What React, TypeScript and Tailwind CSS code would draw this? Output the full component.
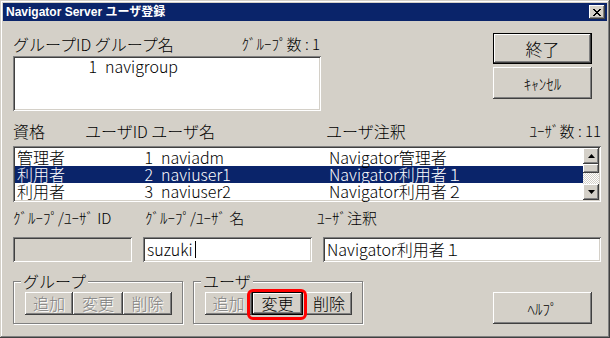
import React from "react";

const raised =
  "shadow-[inset_-1px_-1px_#404040,inset_1px_1px_#ffffff,inset_-2px_-2px_#808080,inset_2px_2px_#d4d0c8]";
const sunken =
  "shadow-[inset_1px_1px_#808080,inset_-1px_-1px_#ffffff,inset_2px_2px_#404040,inset_-2px_-2px_#d4d0c8]";
const disabledText = "text-[#808080] [text-shadow:1px_1px_0_#ffffff]";

function Btn({
  children,
  className = "",
  disabled = false,
}: {
  children: React.ReactNode;
  className?: string;
  disabled?: boolean;
}) {
  return (
    <div
      className={`flex items-center justify-center bg-[#d4d0c8] ${raised} ${
        disabled ? disabledText : "text-black"
      } ${className}`}
    >
      {children}
    </div>
  );
}

function Arrow({ up }: { up: boolean }) {
  return (
    <svg width="7" height="4" viewBox="0 0 7 4">
      {up ? (
        <path d="M3.5 0 L7 4 L0 4 Z" fill="#000" />
      ) : (
        <path d="M0 0 L7 0 L3.5 4 Z" fill="#000" />
      )}
    </svg>
  );
}

const users = [
  { role: "管理者", id: "1", name: "naviadm", note: "Navigator管理者" },
  { role: "利用者", id: "2", name: "naviuser1", note: "Navigator利用者１" },
  { role: "利用者", id: "3", name: "naviuser2", note: "Navigator利用者２" },
];

export default function App() {
  return (
    <div
      className="w-[610px] h-[338px] bg-[#d4d0c8] overflow-hidden shadow-[inset_-1px_-1px_#404040,inset_1px_1px_#d4d0c8,inset_-2px_-2px_#808080,inset_2px_2px_#ffffff] text-[16px] font-light leading-[17px] text-black"
      style={{ fontFamily: '"Noto Sans CJK JP", "Liberation Sans", sans-serif' }}
    >
      {/* Title bar */}
      <div className="mx-[3px] pt-[3px]">
        <div className="h-[18px] bg-[#0a246a] flex items-center justify-between pl-[3px] pr-[2px]">
          <span
            className="text-white font-bold text-[12px] leading-[18px]"
            style={{ fontFamily: '"Liberation Sans", "Noto Sans CJK JP", sans-serif' }}
          >
            Navigator Server ユーザ登録
          </span>
          <div className={`w-[16px] h-[14px] bg-[#d4d0c8] ${raised} flex items-center justify-center`}>
            <svg width="8" height="7" viewBox="0 0 8 7">
              <path
                d="M0 0h2v1h1v1h2v-1h1v-1h2v1h-1v1h-1v1h-1v1h1v1h1v1h1v1h-2v-1h-1v-1h-2v1h-1v1h-2v-1h1v-1h1v-1h1v-1h-1v-1h-1v-1h-1z"
                fill="#000"
              />
            </svg>
          </div>
        </div>
      </div>

      <div className="pl-[13px] pr-[9px]">
        {/* Section 1 */}
        <div className="flex">
          <div className="w-[308px] mt-[12px]">
            <div className="h-[22px] flex items-center justify-between leading-[22px]">
              <span>グループID グループ名</span>
              <span className="pr-[1px] text-[15px]">ｸﾞﾙｰﾌﾟ数 : 1</span>
            </div>
            <div className={`mt-[1px] h-[55px] bg-white ${sunken} pt-[2px] px-[2px]`}>
              <div className="h-[17px] flex leading-[17px]">
                <span className="w-[82px] text-right">1</span>
                <span className="ml-[8px]">navigroup</span>
              </div>
            </div>
          </div>
          <div className="ml-[172px] mt-[12px] w-[99px] flex flex-col">
            <Btn className="h-[31px] border border-black text-[17px]">終了</Btn>
            <Btn className="mt-[3px] h-[32px] text-[15px]">ｷｬﾝｾﾙ</Btn>
          </div>
        </div>

        {/* Section 2 */}
        <div className="mt-[9px] h-[22px] flex items-center leading-[22px]">
          <span className="w-[72px]">資格</span>
          <span className="w-[241px]">ユーザID ユーザ名</span>
          <span>ユーザ注釈</span>
          <span className="ml-auto text-[15px]">ﾕｰｻﾞ数 : 11</span>
        </div>
        <div className={`mt-[4px] h-[56px] bg-white ${sunken} p-[2px] flex`}>
          <div className="flex-1 pt-[1px]">
            {users.map((u, i) => {
              const sel = i === 1;
              return (
                <div
                  key={i}
                  className={`h-[17px] flex leading-[17px] ${sel ? "bg-[#0a246a] text-white" : ""}`}
                >
                  <span className="w-[100px] pl-[2px]">{u.role}</span>
                  <span className="w-[38px] text-right">{u.id}</span>
                  <span className="w-[176px] pl-[8px]">{u.name}</span>
                  <span>{u.note}</span>
                </div>
              );
            })}
          </div>
          <div className="w-[16px] flex flex-col">
            <div className={`h-[16px] bg-[#d4d0c8] ${raised} flex items-center justify-center`}>
              <Arrow up />
            </div>
            <div className={`h-[9px] bg-[#d4d0c8] ${raised}`} />
            <div className="flex-1 bg-[repeating-conic-gradient(#ffffff_0_25%,#d4d0c8_0_50%)] bg-[length:2px_2px]" />
            <div className={`h-[16px] bg-[#d4d0c8] ${raised} flex items-center justify-center`}>
              <Arrow up={false} />
            </div>
          </div>
        </div>

        {/* Section 3 */}
        <div className="mt-[5px] h-[22px] flex items-center leading-[22px] text-[15px]">
          <span className="w-[132px]">ｸﾞﾙｰﾌﾟ/ﾕｰｻﾞ ID</span>
          <span className="w-[172px]">ｸﾞﾙｰﾌﾟ/ﾕｰｻﾞ 名</span>
          <span>ﾕｰｻﾞ注釈</span>
        </div>
        <div className="mt-[8px] flex">
          <div className={`w-[119px] h-[25px] bg-[#d4d0c8] ${sunken}`} />
          <div className={`ml-[11px] w-[169px] h-[25px] bg-white ${sunken} flex items-center pl-[4px]`}>
            <span>suzuki</span>
            <span className="ml-[2px] w-[1px] h-[17px] bg-black" />
          </div>
          <div className={`ml-[11px] flex-1 h-[25px] bg-white ${sunken} flex items-center pl-[4px]`}>
            <span>Navigator利用者１</span>
          </div>
        </div>

        {/* Section 4 */}
        <div className="mt-[8px] flex items-start">
          <fieldset className="w-[170px] h-[54px] border border-[#808080] shadow-[1px_1px_0_#ffffff,inset_1px_1px_0_#ffffff]">
            <legend className="ml-[7px] px-[2px] bg-[#d4d0c8] leading-[22px]">グループ</legend>
            <div className="flex pl-[11px]">
              <Btn disabled className="w-[48px] h-[23px]">追加</Btn>
              <Btn disabled className="w-[50px] h-[23px]">変更</Btn>
              <Btn disabled className="w-[49px] h-[23px]">削除</Btn>
            </div>
          </fieldset>
          <fieldset className="ml-[10px] w-[170px] h-[54px] border border-[#808080] shadow-[1px_1px_0_#ffffff,inset_1px_1px_0_#ffffff]">
            <legend className="ml-[7px] px-[2px] bg-[#d4d0c8] leading-[22px]">ユーザ</legend>
            <div className="flex pl-[11px]">
              <Btn disabled className="w-[47px] h-[23px]">追加</Btn>
              <div className="relative">
                <Btn className="w-[51px] h-[23px] border border-black">変更</Btn>
                <div className="absolute left-[-5px] top-[-3px] w-[60px] h-[31px] border-[3px] border-[#ff0000] rounded-[6px]" />
              </div>
              <Btn className="ml-[3px] w-[46px] h-[23px]">削除</Btn>
            </div>
          </fieldset>
          <Btn className="ml-[130px] mt-[22px] w-[99px] h-[32px] text-[15px]">ﾍﾙﾌﾟ</Btn>
        </div>
      </div>
    </div>
  );
}
